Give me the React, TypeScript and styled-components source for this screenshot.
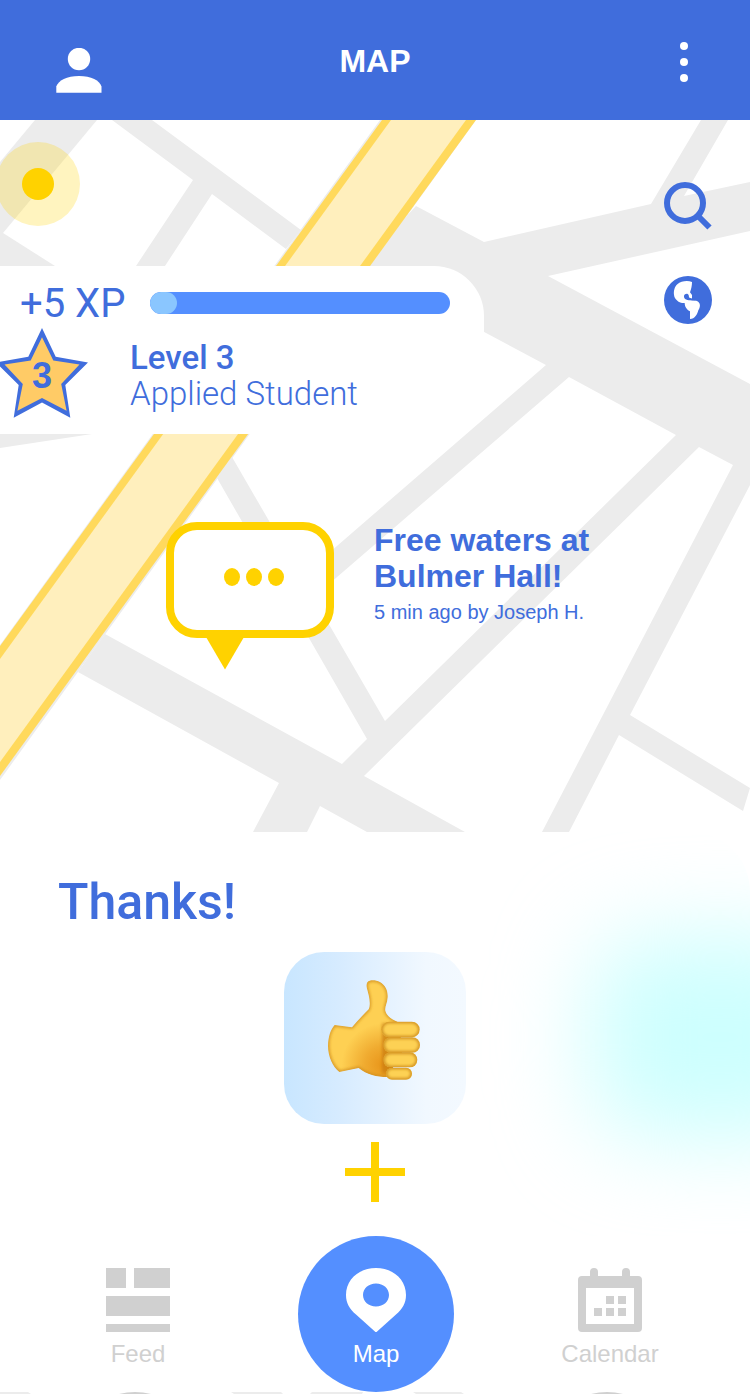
import React from "react";
import styled, { createGlobalStyle } from "styled-components";

const color = {
  header: "#406ddc",
  primary: "#406ddc",
  accent: "#548fff",
  accentLight: "#8ac6ff",
  yellow: "#ffd200",
  road: "#ececec",
  muted: "#d0d0d0",
};

const displayFont = "Roboto, sans-serif";

const GlobalStyle = createGlobalStyle`
  * { box-sizing: border-box; }
  body {
    margin: 0;
    background: #fff;
    font-family: "Liberation Sans", Arial, sans-serif;
    color: ${color.primary};
  }
`;

const Page = styled.div`
  width: 100%;
  overflow: hidden;
`;

const IconButton = styled.button<{ $width?: number }>`
  display: flex;
  align-items: center;
  justify-content: center;
  width: ${(p) => (p.$width ? `${p.$width}px` : "auto")};
  padding: 0;
  border: 0;
  background: none;
  color: inherit;
  cursor: pointer;

  svg {
    display: block;
  }
`;

const Header = styled.header`
  display: grid;
  grid-template-columns: 1fr auto 1fr;
  align-items: center;
  height: 120px;
  padding: 4px 44px 0;
  background: ${color.header};
  color: #fff;
`;

const ProfileButton = styled(IconButton)`
  align-self: end;
  padding-bottom: 26px;
`;

const MenuButton = styled(IconButton)`
  justify-self: end;
`;

const Title = styled.h1`
  margin: 0;
  padding-bottom: 2px;
  font-size: 32px;
  line-height: 36px;
  font-weight: 700;
`;

const MapArea = styled.main`
  position: relative;
  min-height: 712px;
`;

const MapCanvas = styled.svg`
  position: absolute;
  inset: 0;
  width: 100%;
  height: 100%;
`;

const LocationPin = styled.div`
  position: absolute;
  left: -4px;
  top: 22px;
  display: grid;
  place-items: center;
  width: 84px;
  height: 84px;
  border-radius: 50%;
  background: rgba(255, 210, 0, 0.25);

  &::before {
    content: "";
    width: 32px;
    height: 32px;
    border-radius: 50%;
    background: ${color.yellow};
  }
`;

const Overlay = styled.div`
  position: relative;
  display: flex;
  align-items: flex-start;
  justify-content: space-between;
`;

const ProgressCard = styled.section`
  flex: 0 1 484px;
  min-height: 168px;
  margin-top: 146px;
  background: #fff;
  border-radius: 0 50px 50px 0;
`;

const XpRow = styled.div`
  display: flex;
  align-items: center;
  height: 62px;
  padding: 12px 34px 0 20px;
`;

const XpLabel = styled.span`
  flex: 0 0 130px;
  padding-top: 2px;
  font-family: ${displayFont};
  font-size: 40px;
  line-height: 48px;
`;

const XpTrack = styled.div`
  flex: 1;
  height: 22px;
  border-radius: 11px;
  background: ${color.accent};
  overflow: hidden;
`;

const XpFill = styled.div`
  height: 100%;
  border-radius: 11px;
  background: ${color.accentLight};
`;

const LevelRow = styled.div`
  display: flex;
  gap: 42px;
`;

const StarBadge = styled.svg`
  flex: none;
  display: block;
  width: 88px;
  height: 90px;
`;

const LevelText = styled.div`
  padding-top: 12px;
  font-family: ${displayFont};
  font-size: 33px;
  line-height: 36px;
`;

const LevelName = styled.h2`
  margin: 0;
  font-size: inherit;
  font-weight: 500;
`;

const LevelTitle = styled.p`
  margin: 0;
  font-weight: 300;
`;

const MapTools = styled.div`
  display: flex;
  flex-direction: column;
  gap: 46px;
  padding: 62px 38px 0 0;
`;

const Post = styled.article`
  position: relative;
  display: flex;
  gap: 40px;
  padding: 88px 24px 0 166px;
`;

const Bubble = styled.svg`
  flex: none;
  display: block;
`;

const PostTitle = styled.h2`
  margin: 0;
  max-width: 240px;
  font-size: 32px;
  line-height: 36px;
  font-weight: 700;
`;

const PostMeta = styled.p`
  margin: 6px 0 0;
  font-size: 20px;
  line-height: 24px;
`;

const ThanksPanel = styled.section`
  position: relative;
  display: flex;
  flex-direction: column;
  align-items: center;
  min-height: 404px;
  padding: 40px 58px 0;
  border-radius: 0 60px 0 0;
  overflow: hidden;

  > * {
    position: relative;
  }
`;

const Glow = styled.div`
  && {
    position: absolute;
    top: 104px;
    right: -100px;
    width: 260px;
    height: 202px;
    border-radius: 60px;
    background: #cdfffe;
    filter: blur(46px);
  }
`;

const ThanksTitle = styled.h2`
  align-self: stretch;
  margin: 0 0 20px;
  font-family: ${displayFont};
  font-size: 50px;
  line-height: 60px;
  font-weight: 500;
`;

const ThumbButton = styled(IconButton)`
  width: 182px;
  height: 172px;
  margin-bottom: 18px;
  padding-bottom: 16px;
  border-radius: 40px;
  background: linear-gradient(90deg, #c8e6ff 0%, #d6ebff 30%, #f1f8ff 78%, #f3f9ff 100%);
`;

const Nav = styled.nav`
  display: grid;
  grid-template-columns: 276fr 156px 268fr;
  gap: 22px;
  padding-right: 6px;
`;

const NavLink = styled.a<{ $active?: boolean }>`
  justify-self: center;
  display: flex;
  flex-direction: column;
  align-items: center;
  gap: 8px;
  width: 156px;
  height: 156px;
  padding-top: 32px;
  border-radius: 50%;
  background: ${(p) => (p.$active ? color.accent : "none")};
  color: ${(p) => (p.$active ? "#fff" : color.muted)};
  font-size: 24px;
  line-height: 28px;
  text-decoration: none;
`;

const NextRow = styled.svg`
  display: block;
  width: 100%;
  height: 2px;
`;

const PersonIcon = () => (
  <svg width="46" height="46" viewBox="56 48 46 46" fill="currentColor">
    <circle cx="79" cy="59" r="11.2" />
    <path d="M56.3 92.8V86.5C58 80.500 67 75.900 79 75.900S100 80.500 101.500 86.500V92.800Z" />
  </svg>
);

const MoreIcon = () => (
  <svg width="8" height="40" viewBox="0 0 8 40" fill="currentColor">
    <circle cx="4" cy="4" r="4" />
    <circle cx="4" cy="20" r="4" />
    <circle cx="4" cy="36" r="4" />
  </svg>
);

const SearchIcon = () => (
  <svg width="48" height="48" viewBox="0 0 48 48" fill="none" stroke="currentColor" strokeWidth="6">
    <circle cx="21" cy="21" r="18" />
    <path d="M34 34L45.500 45.500" />
  </svg>
);

const GlobeIcon = () => (
  <svg width="48" height="48" viewBox="867 828 144 144">
    <circle cx="939" cy="900" r="72" fill="currentColor" />
    <path
      fill="#fff"
      d="M951 846C938 841 918 843 907 853C898 861 896 874 897 884C898 898 912 910 929 909C929 920 936 930 945 934V957C960 957 967 943 970 931C974 924 976 918 974 911C970 903 963 901 955 901C944 901 928 901 927 891C926 884 933 880 938 882C944 885 939 892 946 895L951 897V885L945 877C949 866 951 857 951 846Z"
    />
    <path d="M936 892C942 898 950 899 962 899" stroke="currentColor" strokeWidth="5" fill="none" />
  </svg>
);

const FeedIcon = () => (
  <svg width="64" height="64" viewBox="0 0 64 64" fill="currentColor">
    <path d="M0 0H20V20H0ZM28 0H64V20H28ZM0 28H64V48H0ZM0 56H64V64H0Z" />
  </svg>
);

const PinIcon = () => (
  <svg width="62" height="64" viewBox="0 0 62 64" fill="currentColor">
    <path
      fillRule="evenodd"
      d="M31 0C14 0 1 11.500 1 27C1 35 4.500 41 11 46.500L31 64.500L51 46.500C57.500 41 61 35 61 27C61 11.500 48 0 31 0ZM31 15.500C38.500 15.500 44 20.500 44 27S38.500 38.500 31 38.500S18 33.500 18 27S23.500 15.500 31 15.500Z"
    />
  </svg>
);

const CalendarIcon = () => (
  <svg width="64" height="64" viewBox="0 0 64 64" fill="currentColor">
    <path
      fillRule="evenodd"
      d="M12 8V4A4 4 0 0 1 20 4V8H44V4A4 4 0 0 1 52 4V8H60A4 4 0 0 1 64 12V60A4 4 0 0 1 60 64H4A4 4 0 0 1 0 60V12A4 4 0 0 1 4 8ZM8 20V56H56V20Z"
    />
    <path d="M28 28h8v8h-8ZM40 28h8v8h-8ZM16 40h8v8h-8ZM28 40h8v8h-8ZM40 40h8v8h-8Z" />
  </svg>
);

const PlusIcon = () => (
  <svg width="60" height="60" viewBox="0 0 60 60" fill={color.yellow}>
    <path d="M26 0H34V26H60V34H34V60H26V34H0V26H26Z" />
  </svg>
);

const palm =
  "M292 127C299 118 318 120 330 126C347 136 354 152 353 172C352 190 344 200 346 212C350 228 365 238 382 245L400 330L352 411C320 411 290 404 266 384L208 396C188 380 174 350 174 318C174 290 182 268 194 255L246 262C262 242 280 224 296 208C304 190 295 160 291 146C289 138 289 132 292 127Z";

const fingers = [
  { x: 334, y: 245, w: 115, h: 47 },
  { x: 340, y: 292, w: 110, h: 46 },
  { x: 340, y: 337, w: 102, h: 45 },
  { x: 348, y: 383, w: 78, h: 36 },
];

const ThumbIcon = () => (
  <svg width="96" height="104" viewBox="171 114 288 312">
    <defs>
      <radialGradient id="palmShade" gradientUnits="userSpaceOnUse" cx="340" cy="375" r="125">
        <stop offset="0" stopColor="#e8951a" />
        <stop offset="0.45" stopColor="#f0ab30" />
        <stop offset="1" stopColor="#fed053" />
      </radialGradient>
      <filter id="soften" x="-10%" y="-10%" width="120%" height="120%">
        <feGaussianBlur stdDeviation="4" />
      </filter>
      <clipPath id="palmClip">
        <path d={palm} />
      </clipPath>
      {fingers.map((f, i) => (
        <clipPath id={`finger${i}`} key={i}>
          <rect x={f.x} y={f.y} width={f.w} height={f.h} rx={f.h / 2} />
        </clipPath>
      ))}
    </defs>
    <g clipPath="url(#palmClip)">
      <path d={palm} fill="url(#palmShade)" />
      <path d={palm} fill="none" stroke="#cf8c1c" strokeWidth="7" filter="url(#soften)" />
      <rect x="336" y="250" width="70" height="150" fill="#c87c10" filter="url(#soften)" opacity="0.7" />
    </g>
    {fingers.map((f, i) => (
      <g clipPath={`url(#finger${i})`} key={i}>
        <rect x={f.x} y={f.y} width={f.w} height={f.h} fill="#fdd154" />
        <rect
          x={f.x}
          y={f.y}
          width={f.w}
          height={f.h}
          rx={f.h / 2}
          fill="none"
          stroke="#c98416"
          strokeWidth="8"
          filter="url(#soften)"
        />
      </g>
    ))}
  </svg>
);

const StreetMap = () => (
  <MapCanvas viewBox="0 120 750 712" preserveAspectRatio="xMidYMin slice" aria-hidden="true">
    <g fill={color.road}>
      <path d="M35 120H97L3 233L55 266H0V162Z" />
      <path d="M112 120H152L301 230L286 249L212 194L165 266H136L193 180Z" />
      <path d="M416 206L484 242L651 204L701 120H728L684 196L750 182V231L548 276L750 384V485L630 715L750 788L743 811L619 735L569 832H542L733 465L699 447L364 776L465 832H367L320 806L307 832H253L279 783L78 672L105 634L342 764L367 739L217 478L232 457L385 721L676 435L569 377L300 609V578L546 365L360 266Z" />
      <path d="M0 434H92L0 448Z" />
      <path d="M380 120H476L249 435L0 780V645Z" />
    </g>
    <path fill="#ffd95c" d="M382 120H476L0 776V646Z" />
    <path fill="#ffefbd" d="M391 120H466L0 762V659Z" />
  </MapCanvas>
);

export default function App() {
  return (
    <Page>
      <GlobalStyle />
      <Header>
        <ProfileButton $width={70} aria-label="Profile">
          <PersonIcon />
        </ProfileButton>
        <Title>MAP</Title>
        <MenuButton $width={44} aria-label="More options">
          <MoreIcon />
        </MenuButton>
      </Header>

      <MapArea>
        <StreetMap />
        <LocationPin />
        <Overlay>
          <ProgressCard>
            <XpRow>
              <XpLabel>+5 XP</XpLabel>
              <XpTrack role="progressbar" aria-label="Experience" aria-valuenow={9} aria-valuemin={0} aria-valuemax={100}>
                <XpFill style={{ width: "9%" }} />
              </XpTrack>
            </XpRow>
            <LevelRow>
              <StarBadge viewBox="0 328 88 90">
                <path
                  fill={color.primary}
                  d="M42 328L55.700 356.800L88 362.500L65.300 385L70.300 417.700L42 402.500L13.700 417.700L18.700 385L-4 362.500L28.300 356.800Z"
                />
                <path
                  fill="#ffcb66"
                  d="M42 337.300L53.300 360.500L79.500 364.600L61.200 384L66.600 410.700L42 398L17.400 410.700L22.800 384L4.500 364.600L30.700 360.500Z"
                />
                <text x="42" y="388" textAnchor="middle" fontSize="36" fontWeight="700" fill={color.primary}>
                  3
                </text>
              </StarBadge>
              <LevelText>
                <LevelName>Level 3</LevelName>
                <LevelTitle>Applied Student</LevelTitle>
              </LevelText>
            </LevelRow>
          </ProgressCard>
          <MapTools>
            <IconButton aria-label="Search">
              <SearchIcon />
            </IconButton>
            <IconButton aria-label="World view">
              <GlobeIcon />
            </IconButton>
          </MapTools>
        </Overlay>

        <Post>
          <Bubble width="168" height="148" viewBox="166 522 168 148">
            <rect x="170" y="526" width="160" height="108" rx="27" fill="#fff" stroke={color.yellow} strokeWidth="8" />
            <path d="M206 637H244L225 669.500Z" fill={color.yellow} />
            <g fill={color.yellow}>
              <ellipse cx="232" cy="577" rx="8" ry="9" />
              <ellipse cx="254" cy="577" rx="8" ry="9" />
              <ellipse cx="276" cy="577" rx="8" ry="9" />
            </g>
          </Bubble>
          <div>
            <PostTitle>Free waters at Bulmer Hall!</PostTitle>
            <PostMeta>5 min ago by Joseph H.</PostMeta>
          </div>
        </Post>
      </MapArea>

      <ThanksPanel>
        <Glow />
        <ThanksTitle>Thanks!</ThanksTitle>
        <ThumbButton aria-label="Thumbs up">
          <ThumbIcon />
        </ThumbButton>
        <IconButton aria-label="Add reaction">
          <PlusIcon />
        </IconButton>
      </ThanksPanel>

      <Nav>
        <NavLink href="#feed">
          <FeedIcon />
          Feed
        </NavLink>
        <NavLink href="#map" $active aria-current="page">
          <PinIcon />
          Map
        </NavLink>
        <NavLink href="#calendar">
          <CalendarIcon />
          Calendar
        </NavLink>
      </Nav>
      <NextRow viewBox="0 0 750 2" preserveAspectRatio="none" aria-hidden="true">
        <path fill={color.road} d="M0 0H28L31 2H0ZM231 0H281L283 2H234ZM312 0H363L362 2H310ZM413 0H461L464 2H416Z" />
        <path fill={color.muted} d="M119 2Q135 -2 151 2ZM591 2Q607 -2 623 2Z" />
      </NextRow>
    </Page>
  );
}
